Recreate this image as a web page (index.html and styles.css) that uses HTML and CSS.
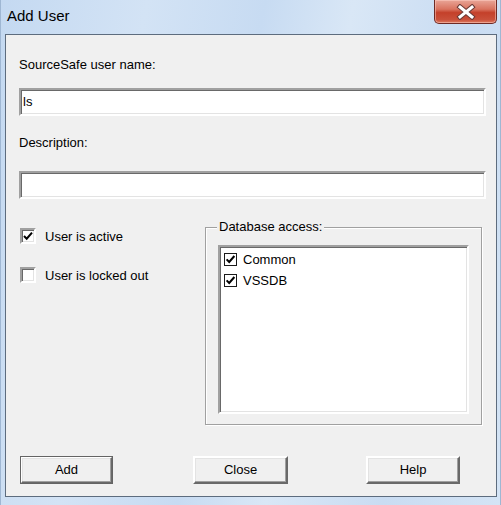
FILE: index.html
```html
<!DOCTYPE html>
<html>
<head>
<meta charset="utf-8">
<link rel="stylesheet" href="styles.css">
</head>
<body>
<div class="window">
  <div class="titlebar">
    <div class="title">Add User</div>
    <div class="close">
      <svg width="24" height="16" viewBox="0 0 24 16">
        <path d="M6 3 L18 13 M18 3 L6 13" stroke="#6a3a36" stroke-width="5" stroke-linecap="square" fill="none"/>
        <path d="M6 3 L18 13 M18 3 L6 13" stroke="#ffffff" stroke-width="3" stroke-linecap="square" fill="none"/>
      </svg>
    </div>
  </div>
  <div class="client">
    <div class="label first">SourceSafe user name:</div>
    <div class="field">ls</div>
    <div class="label second">Description:</div>
    <div class="field field2"></div>
    <div class="row">
      <div class="leftcol">
        <div class="check check1">
          <span class="box sunken">
            <svg width="12" height="12" viewBox="0 0 12 12"><path d="M2 6 L4.7 8.7 L10 2.6" stroke="#000" stroke-width="2" fill="none"/></svg>
          </span>
          <span class="ctext">User is active</span>
        </div>
        <div class="check check2">
          <span class="box sunken"></span>
          <span class="ctext">User is locked out</span>
        </div>
      </div>
      <fieldset class="group">
        <legend>Database access:</legend>
        <div class="list">
          <div class="item">
            <span class="lbox"><svg width="11" height="11" viewBox="0 0 11 11"><path d="M1.6 5.4 L4.2 8 L9.4 2" stroke="#000" stroke-width="2" fill="none"/></svg></span>
            <span>Common</span>
          </div>
          <div class="item">
            <span class="lbox"><svg width="11" height="11" viewBox="0 0 11 11"><path d="M1.6 5.4 L4.2 8 L9.4 2" stroke="#000" stroke-width="2" fill="none"/></svg></span>
            <span>VSSDB</span>
          </div>
        </div>
      </fieldset>
    </div>
    <div class="buttons">
      <div class="btn btn-add">Add</div>
      <div class="btn btn-close">Close</div>
      <div class="btn btn-help">Help</div>
    </div>
  </div>
</div>
</body>
</html>
```
FILE: styles.css
```css
html, body {
  margin: 0;
  padding: 0;
}
body {
  width: 501px;
  height: 505px;
  overflow: hidden;
  font-family: "Liberation Sans", Arial, sans-serif;
  font-size: 13px;
  color: #000;
}
.window {
  width: 501px;
  height: 505px;
  display: flex;
  flex-direction: column;
  background: linear-gradient(100deg, #c4d9f1 0%, #d3e3f5 25%, #c7dbf2 45%, #d9e7f6 60%, #c9dcf2 80%, #d4e4f5 100%);
  box-shadow: inset 1px 0 0 #9fb7d3, inset -1px 0 0 #9fb7d3;
}
.titlebar {
  height: 34px;
  display: flex;
  justify-content: space-between;
  align-items: flex-start;
}
.title {
  font-size: 15px;
  line-height: 18px;
  margin: 7px 0 0 7px;
}
.close {
  width: 61px;
  height: 23px;
  margin-right: 4px;
  border: 1px solid #6e2a24;
  border-top: none;
  border-radius: 0 0 5px 5px;
  background: linear-gradient(to bottom, #e9a597 0%, #d9735f 40%, #c4402a 55%, #c9503a 85%, #de7a5f 100%);
  box-shadow: inset 0 0 0 1px rgba(255, 210, 200, 0.5);
  display: flex;
  align-items: center;
  justify-content: center;
}
.client {
  margin: 0 4px 8px 5px;
  border: 1px solid #5d6c7e;
  background: #f0f0f0;
  height: 461px;
  padding: 0 10px 0 13px;
  display: flex;
  flex-direction: column;
}
.label {
  line-height: 16px;
  height: 16px;
}
.label.first {
  margin-top: 22px;
}
.label.second {
  margin-top: 19px;
}
.field {
  margin-top: 15px;
  height: 24px;
  background: #fff;
  border-style: solid;
  border-width: 2px;
  border-color: #a0a0a0 #ffffff #ffffff #a0a0a0;
  box-shadow: inset 1px 1px 0 #696969, inset -1px -1px 0 #e3e3e3;
  padding-left: 2px;
  line-height: 24px;
}
.field2 {
  margin-top: 20px;
}
.row {
  margin-top: 20px;
  display: flex;
  align-items: flex-start;
}
.leftcol {
  width: 186px;
  display: flex;
  flex-direction: column;
}
.check {
  display: flex;
  align-items: center;
  height: 16px;
  margin-left: 1px;
}
.check1 {
  margin-top: 9px;
}
.check2 {
  margin-top: 23px;
}
.box {
  width: 12px;
  height: 12px;
  background: #fff;
  display: flex;
  align-items: center;
  justify-content: center;
}
.sunken {
  border-style: solid;
  border-width: 2px;
  border-color: #a0a0a0 #ffffff #ffffff #a0a0a0;
  box-shadow: inset 1px 1px 0 #696969, inset -1px -1px 0 #e3e3e3;
}
.ctext {
  margin-left: 9px;
}
.group {
  margin: 0;
  width: 251px;
  padding: 0 12px 10px 12px;
  border: 1px solid #a0a0a0;
  box-shadow: 1px 1px 0 #ffffff, inset 1px 1px 0 #ffffff;
}
.group legend {
  padding: 0 2px;
  margin-left: -1px;
  line-height: 16px;
  background: #f0f0f0;
}
.list {
  margin-top: 10px;
  height: 163px;
  background: #fff;
  border-style: solid;
  border-width: 2px;
  border-color: #a0a0a0 #ffffff #ffffff #a0a0a0;
  box-shadow: inset 1px 1px 0 #696969, inset -1px -1px 0 #e3e3e3;
  padding: 2px 0 0 4px;
}
.item {
  display: flex;
  align-items: center;
  height: 21px;
}
.lbox {
  width: 11px;
  height: 11px;
  border: 1px solid #1a1a1a;
  background: #fff;
  margin-right: 6px;
  display: flex;
  align-items: center;
  justify-content: center;
}
.buttons {
  margin-top: 31px;
  display: flex;
}
.btn {
  height: 24px;
  line-height: 24px;
  text-align: center;
  background: #f0f0f0;
  border-style: solid;
  border-width: 2px;
  border-color: #ffffff #696969 #696969 #ffffff;
  box-shadow: inset -1px -1px 0 #a0a0a0, inset 1px 1px 0 #e3e3e3;
}
.btn-add {
  width: 89px;
  margin-left: 1px;
  outline: 1px solid #646464;
  outline-offset: -1px;
}
.btn-close {
  width: 91px;
  margin-left: 80px;
}
.btn-help {
  width: 90px;
  margin-left: 78px;
}
```
